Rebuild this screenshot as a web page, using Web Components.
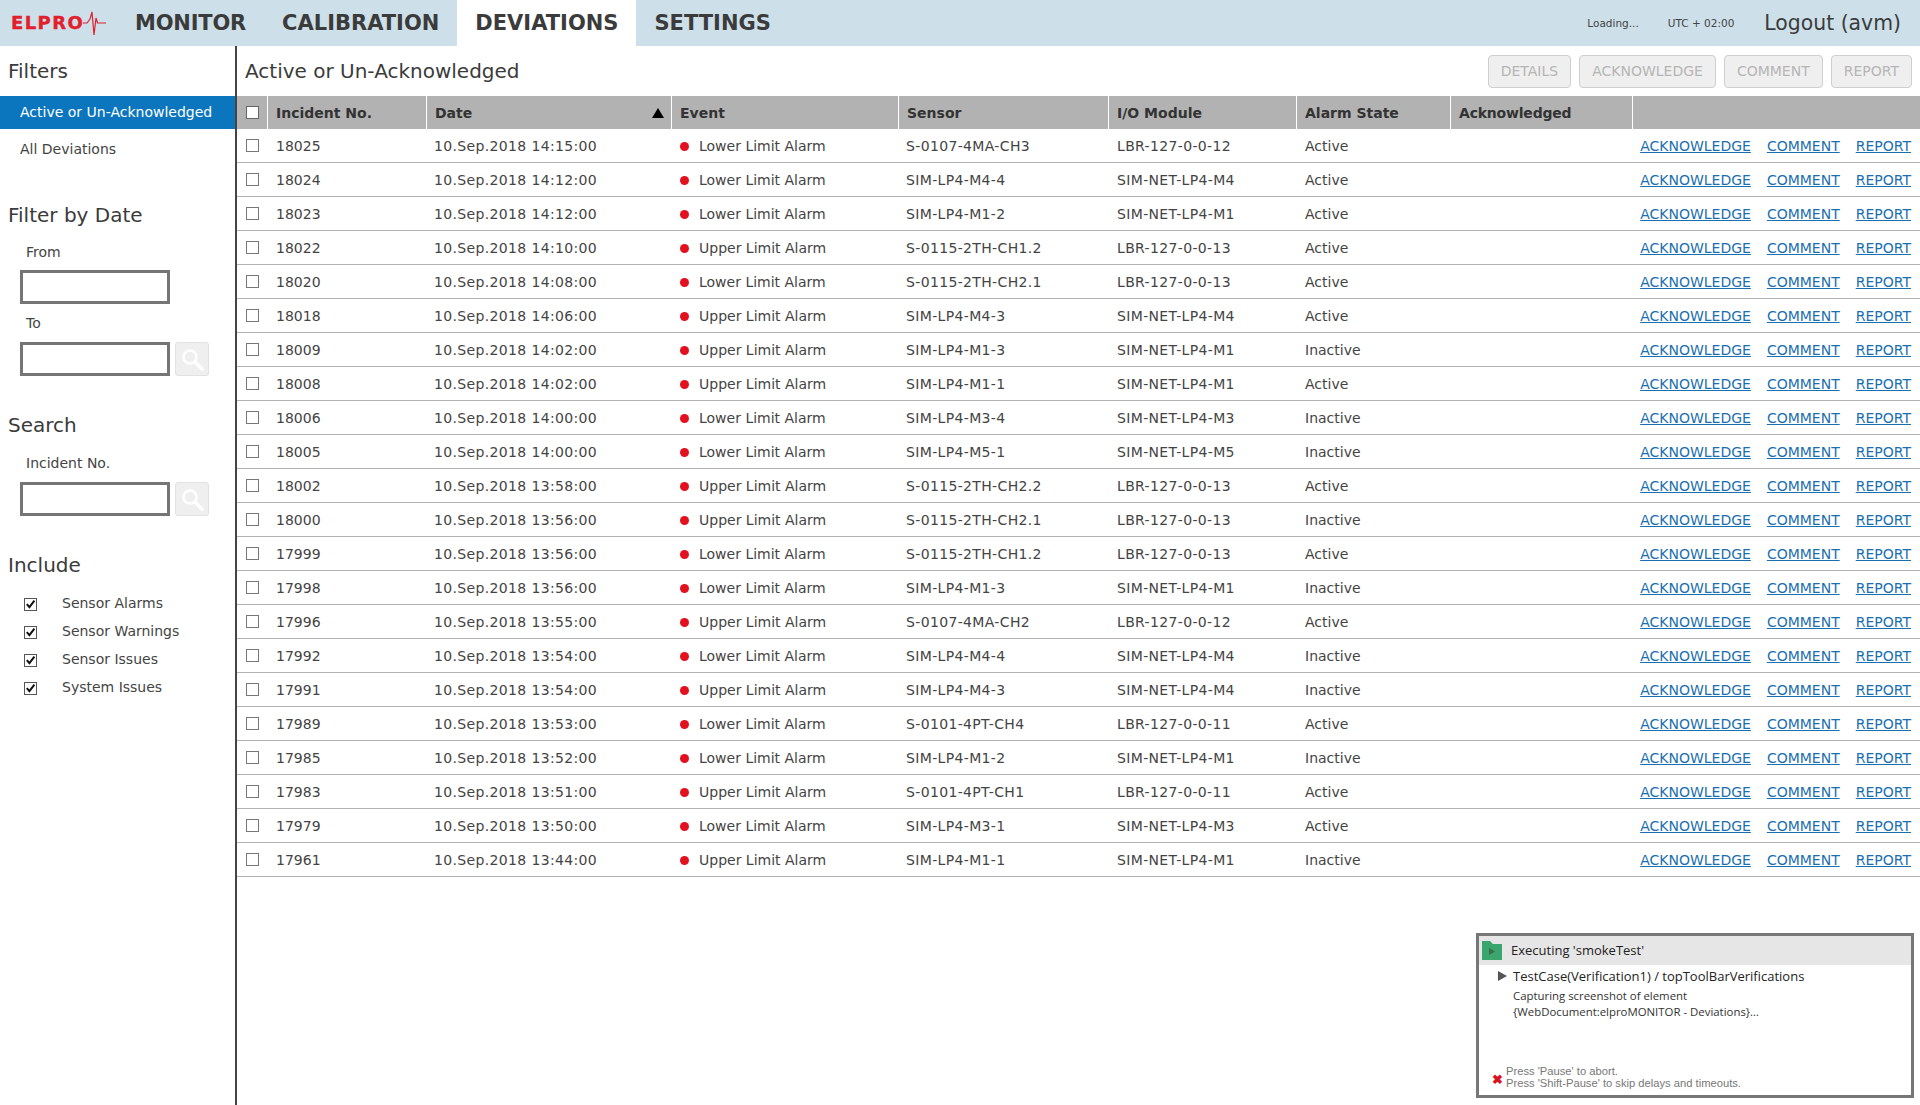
<!DOCTYPE html>
<html>
<head>
<meta charset="utf-8">
<title>elproMONITOR - Deviations</title>
<style>
    html, body { margin: 0; height: 100%; overflow: hidden; background: #fff; }
    body { font-family: "DejaVu Sans", sans-serif; color: #444; }
</style>
</head>
<body>
<app-shell>
    <top-bar slot="top"></top-bar>
    <filter-panel slot="side"></filter-panel>
    <deviation-view slot="main"></deviation-view>
</app-shell>
<run-dialog></run-dialog>

<script>
class AppShell extends HTMLElement {
    constructor() {
        super();
        this.attachShadow({ mode: 'open' });
        this.shadowRoot.innerHTML = `
            <style>
                :host { display: flex; flex-direction: column; height: 1105px; }
                .body { display: flex; flex: 1; min-height: 0; }
                .side { width: 235px; flex: none; border-right: 2px solid #444; box-sizing: content-box; }
                .main { flex: 1; min-width: 0; }
            </style>
            <slot name="top"></slot>
            <div class="body">
                <div class="side"><slot name="side"></slot></div>
                <div class="main"><slot name="main"></slot></div>
            </div>
        `;
    }
}
customElements.define('app-shell', AppShell);

class TopBar extends HTMLElement {
    constructor() {
        super();
        this.attachShadow({ mode: 'open' });
        this.shadowRoot.innerHTML = `
            <style>
                :host { display: flex; align-items: stretch; height: 46px; background: #cddfe9; color: #3b3b3b; }
                .logo { display: flex; align-items: center; width: 117px; padding-left: 11px; box-sizing: border-box; flex: none; }
                .logo span { font: bold 18px/1 "DejaVu Sans", sans-serif; color: #e2202c; letter-spacing: 1.4px; -webkit-text-stroke: 0.4px #e2202c; }
                .logo svg { margin-left: -1px; flex: none; }
                .tab { display: flex; align-items: center; padding: 0 18px; font-weight: bold; font-size: 21px; }
                .tab.on { background: #fff; }
                .tab.first { letter-spacing: -0.2px; }
                .grow { flex: 1; }
                .small { display: flex; align-items: center; font-size: 10.5px; color: #444; }
                .loading { margin-right: 29px; }
                .zone { margin-right: 30px; }
                .logout { display: flex; align-items: center; font-size: 20.4px; margin-right: 19px; color: #3b3b3b; }
            </style>
            <div class="logo">
                <span>ELPRO</span>
                <svg width="24" height="26" viewBox="0 0 24 26"><path d="M0 13 H4 L7 9 L9 2 L11 25 L13 8 L14.5 13 H23" fill="none" stroke="#e2202c" stroke-width="1.2"/></svg>
            </div>
            <div class="tab first">MONITOR</div>
            <div class="tab">CALIBRATION</div>
            <div class="tab on">DEVIATIONS</div>
            <div class="tab">SETTINGS</div>
            <div class="grow"></div>
            <div class="small loading">Loading...</div>
            <div class="small zone">UTC + 02:00</div>
            <div class="logout">Logout (avm)</div>
        `;
    }
}
customElements.define('top-bar', TopBar);

class FieldInput extends HTMLElement {
    constructor() {
        super();
        this.attachShadow({ mode: 'open' });
        const search = this.hasAttribute('search');
        this.shadowRoot.innerHTML = `
            <style>
                :host { display: block; }
                .label { height: var(--label-h, 35px); line-height: var(--label-h, 35px); padding-left: 26px; font-size: 14px; }
                .row { display: flex; gap: 5px; padding-left: 20px; }
                .box { width: 150px; height: 34px; border: 3px solid #757575; box-sizing: border-box; background: #fff; }
                .btn { width: 34px; height: 34px; box-sizing: border-box; background: #efefef; border: 1px solid #e2e2e2; border-radius: 3px; display: flex; align-items: center; justify-content: center; }
            </style>
            <div class="label"><slot></slot></div>
            <div class="row">
                <div class="box"></div>
                ${search ? `<div class="btn"><svg width="24" height="24" viewBox="0 0 24 24"><circle cx="10" cy="10" r="6.5" fill="none" stroke="#fff" stroke-width="2.5"/><path d="M15 15 L22 22" stroke="#fff" stroke-width="3.5" stroke-linecap="round"/></svg></div>` : ''}
            </div>
        `;
    }
}
customElements.define('field-input', FieldInput);

class CheckOption extends HTMLElement {
    constructor() {
        super();
        this.attachShadow({ mode: 'open' });
        this.shadowRoot.innerHTML = `
            <style>
                :host { display: flex; height: 28px; font-size: 14px; padding-left: 24px; }
                .box { width: 13px; height: 13px; margin-top: 7px; box-sizing: border-box; border: 1px solid #555; flex: none; background: #fff; }
                svg { display: block; }
                .txt { margin-left: 25px; line-height: 24px; }
            </style>
            <div class="box"><svg width="11" height="11" viewBox="0 0 11 11"><path d="M1.8 5.2 L4.4 8.2 L9.4 1.6" fill="none" stroke="#111" stroke-width="2"/></svg></div>
            <div class="txt"><slot></slot></div>
        `;
    }
}
customElements.define('check-option', CheckOption);

class FilterPanel extends HTMLElement {
    constructor() {
        super();
        this.attachShadow({ mode: 'open' });
        this.shadowRoot.innerHTML = `
            <style>
                :host { display: block; color: #444; }
                h3 { margin: 0; font-weight: normal; font-size: 20px; color: #3b3b3b; padding-left: 8px; height: 40px; line-height: 40px; }
                h3.first { height: 50px; line-height: 50px; }
                .item { font-size: 14px; padding-left: 20px; }
                .item.on { height: 33px; line-height: 33px; background: #0b76bd; color: #fff; }
                .item.off { height: 41px; line-height: 41px; }
                .date { margin-top: 25px; }
                .search { margin-top: 29px; }
                .incl { margin-top: 29px; }
                .opts { margin-top: 6px; }
            </style>
            <h3 class="first">Filters</h3>
            <div class="item on">Active or Un-Acknowledged</div>
            <div class="item off">All Deviations</div>
            <h3 class="date">Filter by Date</h3>
            <field-input>From</field-input>
            <field-input search style="--label-h: 38px">To</field-input>
            <h3 class="search">Search</h3>
            <field-input search style="--label-h: 37px">Incident No.</field-input>
            <h3 class="incl">Include</h3>
            <div class="opts">
                <check-option>Sensor Alarms</check-option>
                <check-option>Sensor Warnings</check-option>
                <check-option>Sensor Issues</check-option>
                <check-option>System Issues</check-option>
            </div>
        `;
    }
}
customElements.define('filter-panel', FilterPanel);

const rows = [
    ['18025', '14:15:00', 'Lower', 'S-0107-4MA-CH3', 'LBR-127-0-0-12', 'Active'],
    ['18024', '14:12:00', 'Lower', 'SIM-LP4-M4-4', 'SIM-NET-LP4-M4', 'Active'],
    ['18023', '14:12:00', 'Lower', 'SIM-LP4-M1-2', 'SIM-NET-LP4-M1', 'Active'],
    ['18022', '14:10:00', 'Upper', 'S-0115-2TH-CH1.2', 'LBR-127-0-0-13', 'Active'],
    ['18020', '14:08:00', 'Lower', 'S-0115-2TH-CH2.1', 'LBR-127-0-0-13', 'Active'],
    ['18018', '14:06:00', 'Upper', 'SIM-LP4-M4-3', 'SIM-NET-LP4-M4', 'Active'],
    ['18009', '14:02:00', 'Upper', 'SIM-LP4-M1-3', 'SIM-NET-LP4-M1', 'Inactive'],
    ['18008', '14:02:00', 'Upper', 'SIM-LP4-M1-1', 'SIM-NET-LP4-M1', 'Active'],
    ['18006', '14:00:00', 'Lower', 'SIM-LP4-M3-4', 'SIM-NET-LP4-M3', 'Inactive'],
    ['18005', '14:00:00', 'Lower', 'SIM-LP4-M5-1', 'SIM-NET-LP4-M5', 'Inactive'],
    ['18002', '13:58:00', 'Upper', 'S-0115-2TH-CH2.2', 'LBR-127-0-0-13', 'Active'],
    ['18000', '13:56:00', 'Upper', 'S-0115-2TH-CH2.1', 'LBR-127-0-0-13', 'Inactive'],
    ['17999', '13:56:00', 'Lower', 'S-0115-2TH-CH1.2', 'LBR-127-0-0-13', 'Active'],
    ['17998', '13:56:00', 'Lower', 'SIM-LP4-M1-3', 'SIM-NET-LP4-M1', 'Inactive'],
    ['17996', '13:55:00', 'Upper', 'S-0107-4MA-CH2', 'LBR-127-0-0-12', 'Active'],
    ['17992', '13:54:00', 'Lower', 'SIM-LP4-M4-4', 'SIM-NET-LP4-M4', 'Inactive'],
    ['17991', '13:54:00', 'Upper', 'SIM-LP4-M4-3', 'SIM-NET-LP4-M4', 'Inactive'],
    ['17989', '13:53:00', 'Lower', 'S-0101-4PT-CH4', 'LBR-127-0-0-11', 'Active'],
    ['17985', '13:52:00', 'Lower', 'SIM-LP4-M1-2', 'SIM-NET-LP4-M1', 'Inactive'],
    ['17983', '13:51:00', 'Upper', 'S-0101-4PT-CH1', 'LBR-127-0-0-11', 'Active'],
    ['17979', '13:50:00', 'Lower', 'SIM-LP4-M3-1', 'SIM-NET-LP4-M3', 'Active'],
    ['17961', '13:44:00', 'Upper', 'SIM-LP4-M1-1', 'SIM-NET-LP4-M1', 'Inactive']
];

class DeviationTable extends HTMLElement {
    constructor() {
        super();
        this.attachShadow({ mode: 'open' });
        const body = rows.map(r => `
            <tr>
                <td class="chk"><span class="cb"></span></td>
                <td>${r[0]}</td>
                <td class="wide tight">10.Sep.2018 ${r[1]}</td>
                <td><span class="dot"></span>${r[2]} Limit Alarm</td>
                <td class="wide tight">${r[3]}</td>
                <td class="wide">${r[4]}</td>
                <td>${r[5]}</td>
                <td></td>
                <td class="acts"><a>ACKNOWLEDGE</a><a>COMMENT</a><a>REPORT</a></td>
            </tr>`).join('');
        this.shadowRoot.innerHTML = `
            <style>
                :host { display: block; font-size: 14px; color: #444; }
                table { border-collapse: separate; border-spacing: 0; table-layout: fixed; width: 1683px; }
                th { height: 33px; padding: 0 0 0 8px; background: #b2b2b2; color: #333; text-align: left; font-size: 14px; border-right: 1px solid #fff; box-sizing: border-box; position: relative; }
                td { height: 34px; padding: 0 0 0 8px; border-bottom: 1px solid #b4b4b4; box-sizing: border-box; white-space: nowrap; }
                .wide { letter-spacing: 0.35px; }
                td.tight { padding-left: 7px; }
                .chk { padding-left: 9px; }
                .cb { display: block; width: 13px; height: 13px; box-sizing: border-box; border: 1px solid #777; background: #fff; }
                th .cb { border-color: #666; }
                .dot { display: inline-block; width: 9px; height: 9px; border-radius: 50%; background: #e3101f; margin-right: 10px; }
                .sort { position: absolute; right: 7px; top: 12px; width: 0; height: 0; border-left: 6px solid transparent; border-right: 6px solid transparent; border-bottom: 10px solid #000; }
                .acts { display: flex; justify-content: flex-end; align-items: center; gap: 16px; padding-right: 9px; height: 34px; }
                a { color: #1a6fb0; text-decoration: underline; }
            </style>
            <table>
                <colgroup>
                    <col style="width: 31px"><col style="width: 159px"><col style="width: 245px"><col style="width: 227px">
                    <col style="width: 210px"><col style="width: 188px"><col style="width: 154px"><col style="width: 182px"><col>
                </colgroup>
                <thead>
                    <tr>
                        <th class="chk"><span class="cb"></span></th>
                        <th>Incident No.</th>
                        <th>Date<span class="sort"></span></th>
                        <th>Event</th>
                        <th>Sensor</th>
                        <th>I/O Module</th>
                        <th>Alarm State</th>
                        <th style="letter-spacing: -0.2px">Acknowledged</th>
                        <th style="border-right: 0"></th>
                    </tr>
                </thead>
                <tbody>${body}</tbody>
            </table>
        `;
    }
}
customElements.define('deviation-table', DeviationTable);

class DeviationView extends HTMLElement {
    constructor() {
        super();
        this.attachShadow({ mode: 'open' });
        this.shadowRoot.innerHTML = `
            <style>
                :host { display: block; }
                .head { display: flex; align-items: center; height: 50px; padding: 0 8px 0 8px; }
                .title { flex: 1; font-size: 20px; color: #3b3b3b; }
                .btn { height: 33px; line-height: 31px; margin-left: 8px; padding: 0 12px; box-sizing: border-box; font-size: 14px; color: #b5b5b5; background: #efefef; border: 1px solid #cfcfcf; border-radius: 4px; }
            </style>
            <div class="head">
                <div class="title">Active or Un-Acknowledged</div>
                <div class="btn">DETAILS</div>
                <div class="btn">ACKNOWLEDGE</div>
                <div class="btn">COMMENT</div>
                <div class="btn">REPORT</div>
            </div>
            <deviation-table></deviation-table>
        `;
    }
}
customElements.define('deviation-view', DeviationView);

class RunDialog extends HTMLElement {
    constructor() {
        super();
        this.attachShadow({ mode: 'open' });
        this.shadowRoot.innerHTML = `
            <style>
                :host { position: absolute; left: 1476px; top: 933px; width: 438px; height: 165px; box-sizing: border-box; border: 3px solid #777; background: #fff; font-family: "Open Sans", sans-serif; color: #222; display: block; }
                .bar { display: flex; align-items: center; height: 29px; background: #e6e6e6; padding-left: 3px; font-size: 13px; }
                .bar svg { margin-right: 9px; }
                .bar span { margin-top: -2px; }
                .case { display: flex; align-items: center; margin: 1px 0 0 19px; height: 20px; font-size: 13px; }
                .tri { width: 0; height: 0; border-left: 9px solid #555; border-top: 5px solid transparent; border-bottom: 5px solid transparent; margin-right: 6px; }
                .msg { margin: 2px 0 0 34px; font-size: 11.4px; line-height: 16px; color: #333; }
                .foot { position: absolute; left: 13px; bottom: 6px; display: flex; align-items: center; gap: 3px; font: 11.2px/12px "Liberation Sans", sans-serif; color: #777; }
                .x { color: #d8131f; font-weight: bold; font-size: 13px; line-height: 12px; margin-top: 6px; }
            </style>
            <div class="bar">
                <svg width="20" height="19" viewBox="0 0 20 19"><path d="M0 0 H8 L11 3 H20 V19 H0 Z" fill="#3aa56c"/><path d="M7 7 L13 10.5 L7 14 Z" fill="#3c6b50"/></svg>
                <span>Executing 'smokeTest'</span>
            </div>
            <div class="case"><span class="tri"></span><span>TestCase(Verification1) / topToolBarVerifications</span></div>
            <div class="msg">Capturing screenshot of element<br>{WebDocument:elproMONITOR - Deviations}...</div>
            <div class="foot">
                <span class="x">✖</span>
                <div>Press 'Pause' to abort.<br>Press 'Shift-Pause' to skip delays and timeouts.</div>
            </div>
        `;
    }
}
customElements.define('run-dialog', RunDialog);
</script>
</body>
</html>
